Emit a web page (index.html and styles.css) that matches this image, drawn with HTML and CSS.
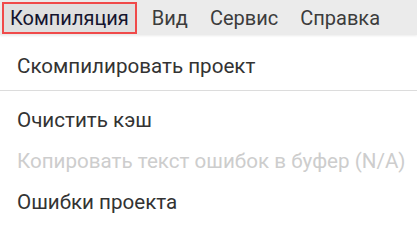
FILE: index.html
```html
<!DOCTYPE html>
<html lang="ru">
<head>
  <meta charset="UTF-8" />
  <title>Меню</title>
  <link rel="stylesheet" href="styles.css">
</head>
<body>

<div class="menubar">
  <div class="menu-item active">Компиляция</div>
  <div class="menu-item">Вид</div>
  <div class="menu-item">Сервис</div>
  <div class="menu-item">Справка</div>
</div>

<!-- Выпадающее меню "Компиляция" -->
<div class="dropdown">
  <div class="drop-item">Скомпилировать проект</div>
  <div class="separator"></div>
  <div class="drop-item">Очистить кэш</div>
  <div class="drop-item disabled">Копировать текст ошибок в буфер (N/A)</div>
  <div class="drop-item">Ошибки проекта</div>
</div>

</body>
</html>
```

FILE: styles.css
```css
body {
  margin: 0;
  padding: 0;
  font-family: Roboto, "Noto Sans", sans-serif;
  background: #fff;
  width: 417px;
  height: 232px;
  overflow: hidden;
}
.menubar {
  display: flex;
  align-items: stretch;
  height: 35px;
  padding: 2px 0 0 2px;
  box-sizing: border-box;
  background: #ebebeb;
  box-shadow: 0 1px 2px rgba(0,0,0,0.08);
  position: relative;
  z-index: 1;
}
.menu-item {
  display: flex;
  align-items: center;
  padding: 0 5px;
  margin-right: 8px;
  margin-bottom: 1px;
  font-size: 20px;
  color: #3c3c3c;
  border: 2px solid transparent;
}
.menu-item.active {
  border-color: #f04a4a;
  background: #e0e0e0;
  color: #14142e;
  padding: 0 6px;
}
.dropdown {
  padding-top: 11px;
}
.drop-item {
  height: 41px;
  line-height: 41px;
  padding-left: 17px;
  font-size: 20.6px;
  color: #333;
}
.drop-item.disabled {
  color: #cdcdcd;
}
.separator {
  height: 1px;
  background: #dcdcdc;
  margin: 3px 0 9px;
}
```
